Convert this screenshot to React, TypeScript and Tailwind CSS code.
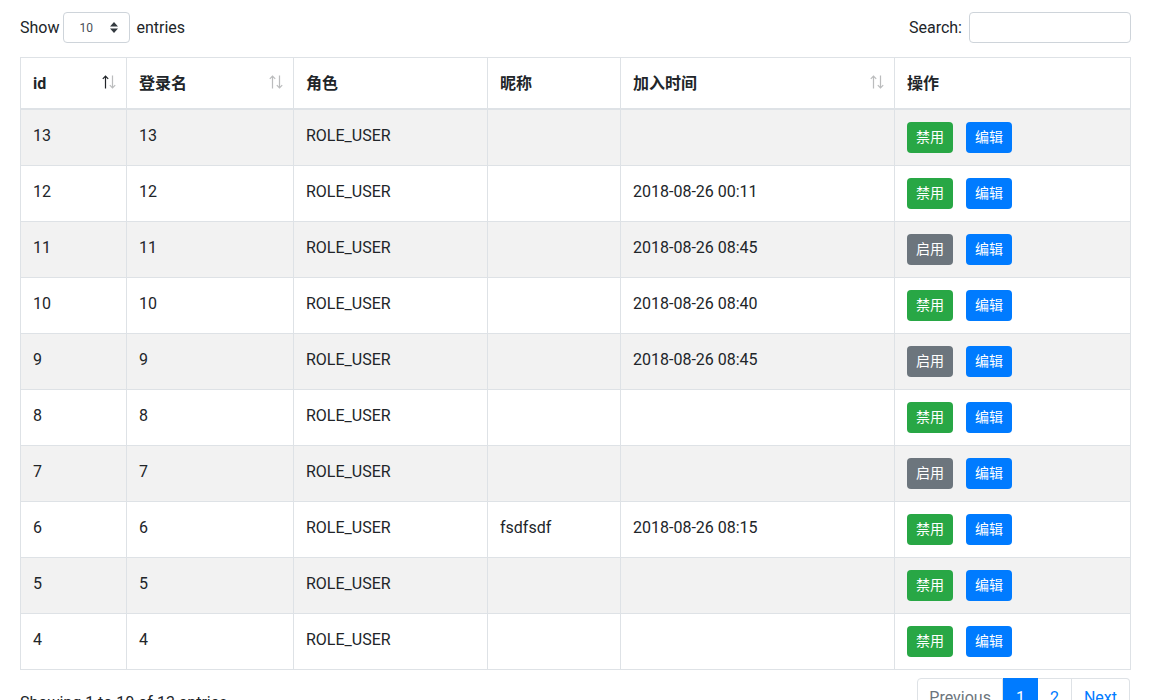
import { useState } from 'react';

interface User {
  id: number;
  login: string;
  role: string;
  nickname: string;
  joined: string;
  enabled: boolean;
}

const users: User[] = [
  { id: 13, login: '13', role: 'ROLE_USER', nickname: '', joined: '', enabled: true },
  { id: 12, login: '12', role: 'ROLE_USER', nickname: '', joined: '2018-08-26 00:11', enabled: true },
  { id: 11, login: '11', role: 'ROLE_USER', nickname: '', joined: '2018-08-26 08:45', enabled: false },
  { id: 10, login: '10', role: 'ROLE_USER', nickname: '', joined: '2018-08-26 08:40', enabled: true },
  { id: 9, login: '9', role: 'ROLE_USER', nickname: '', joined: '2018-08-26 08:45', enabled: false },
  { id: 8, login: '8', role: 'ROLE_USER', nickname: '', joined: '', enabled: true },
  { id: 7, login: '7', role: 'ROLE_USER', nickname: '', joined: '', enabled: false },
  { id: 6, login: '6', role: 'ROLE_USER', nickname: 'fsdfsdf', joined: '2018-08-26 08:15', enabled: true },
  { id: 5, login: '5', role: 'ROLE_USER', nickname: '', joined: '', enabled: true },
  { id: 4, login: '4', role: 'ROLE_USER', nickname: '', joined: '', enabled: true },
];

function Arrow({ down, active }: { down?: boolean; active?: boolean }) {
  return (
    <svg width="7" height="14" viewBox="0 0 7 14" className={active ? 'opacity-100' : 'opacity-30'}>
      {down ? (
        <path d="M3.5 0.5 V13 M0.8 10.2 L3.5 13 L6.2 10.2" stroke="#212529" strokeWidth="1.2" fill="none" />
      ) : (
        <path d="M3.5 13.5 V1 M0.8 3.8 L3.5 1 L6.2 3.8" stroke="#212529" strokeWidth="1.2" fill="none" />
      )}
    </svg>
  );
}

// sortable header: arrows sit on the right, active one is dark
function SortTh({ label, active }: { label: string; active?: boolean }) {
  return (
    <th className="relative border border-[#dee2e6] border-b-2 pl-3 pr-[30px] pt-[14px] pb-[12px] text-left font-bold leading-6 align-bottom">
      {label}
      <span className="absolute right-[10px] top-[17px] flex">
        <Arrow active={active} />
        <Arrow down />
      </span>
    </th>
  );
}

function Th({ label }: { label: string }) {
  return (
    <th className="border border-[#dee2e6] border-b-2 px-3 pt-[14px] pb-[12px] text-left font-bold leading-6 align-bottom">
      {label}
    </th>
  );
}

export default function App() {
  const [pageSize, setPageSize] = useState('10');
  const [query, setQuery] = useState('');

  const td = 'border border-[#dee2e6] px-3 pt-[14px] leading-6 align-top';

  return (
    <div
      className="min-h-screen bg-white text-[#212529] text-base"
      style={{ fontFamily: '"Segoe UI", Roboto, "Noto Sans CJK SC", sans-serif' }}
    >
      <div className="ml-[20px] w-[1111px] pt-[12px]">
        {/* top controls */}
        <div className="flex items-center justify-between h-[31px]">
          <label className="flex items-center gap-[4px] leading-6">
            Show
            <div className="relative">
              <select
                value={pageSize}
                onChange={(e) => setPageSize(e.target.value)}
                className="appearance-none h-[31px] w-[67px] rounded border border-[#ced4da] bg-white pl-[15px] text-xs text-[#495057] outline-none"
              >
                <option>10</option>
                <option>25</option>
                <option>50</option>
                <option>100</option>
              </select>
              <svg className="pointer-events-none absolute right-[12px] top-[10px]" width="8" height="11" viewBox="0 0 8 11">
                <path d="M4 0 L8 4.5 H0 Z M0 6.5 H8 L4 11 Z" fill="#343a40" />
              </svg>
            </div>
            <span className="ml-[2px]">entries</span>
          </label>
          <label className="flex items-center gap-[7px] leading-6">
            Search:
            <input
              value={query}
              onChange={(e) => setQuery(e.target.value)}
              className="h-[31px] w-[162px] rounded border border-[#ced4da] bg-white px-2 text-sm outline-none"
            />
          </label>
        </div>

        {/* table */}
        <table className="mt-[14px] w-full table-fixed border-collapse border border-[#dee2e6]">
          <colgroup>
            <col className="w-[106px]" />
            <col className="w-[167px]" />
            <col className="w-[194px]" />
            <col className="w-[133px]" />
            <col className="w-[274px]" />
            <col />
          </colgroup>
          <thead>
            <tr>
              <SortTh label="id" active />
              <SortTh label="登录名" />
              <Th label="角色" />
              <Th label="昵称" />
              <SortTh label="加入时间" />
              <Th label="操作" />
            </tr>
          </thead>
          <tbody>
            {users.map((u, i) => (
              <tr key={u.id} className={i % 2 === 0 ? 'bg-[#f2f2f2]' : 'bg-white'}>
                <td className={td}>{u.id}</td>
                <td className={td}>{u.login}</td>
                <td className={td}>{u.role}</td>
                <td className={td}>{u.nickname}</td>
                <td className={td}>{u.joined}</td>
                <td className="border border-[#dee2e6] px-3 pt-3 pb-[12px] align-top">
                  <div className="flex gap-[13px]">
                    <button
                      className={`h-[31px] w-[46px] rounded text-sm leading-[21px] text-white ${
                        u.enabled ? 'bg-[#28a745]' : 'bg-[#6c757d]'
                      }`}
                    >
                      {u.enabled ? '禁用' : '启用'}
                    </button>
                    <button className="h-[31px] w-[46px] rounded bg-[#007bff] text-sm leading-[21px] text-white">
                      编辑
                    </button>
                  </div>
                </td>
              </tr>
            ))}
          </tbody>
        </table>

        {/* footer */}
        <div className="flex justify-between pt-[8px] pb-6">
          <div className="pt-[13px] leading-6">Showing 1 to 10 of 13 entries</div>
          <ul className="flex mr-[1px]">
            <li className="rounded-l border border-[#dee2e6] px-[11px] py-[7px] leading-6 text-[#6c757d]">Previous</li>
            <li className="border border-[#007bff] bg-[#007bff] px-3 py-[7px] leading-6 text-white">1</li>
            <li className="border border-l-0 border-[#dee2e6] px-3 py-[7px] leading-6 text-[#007bff]">2</li>
            <li className="rounded-r border border-l-0 border-[#dee2e6] px-3 py-[7px] leading-6 text-[#007bff]">Next</li>
          </ul>
        </div>
      </div>
    </div>
  );
}
